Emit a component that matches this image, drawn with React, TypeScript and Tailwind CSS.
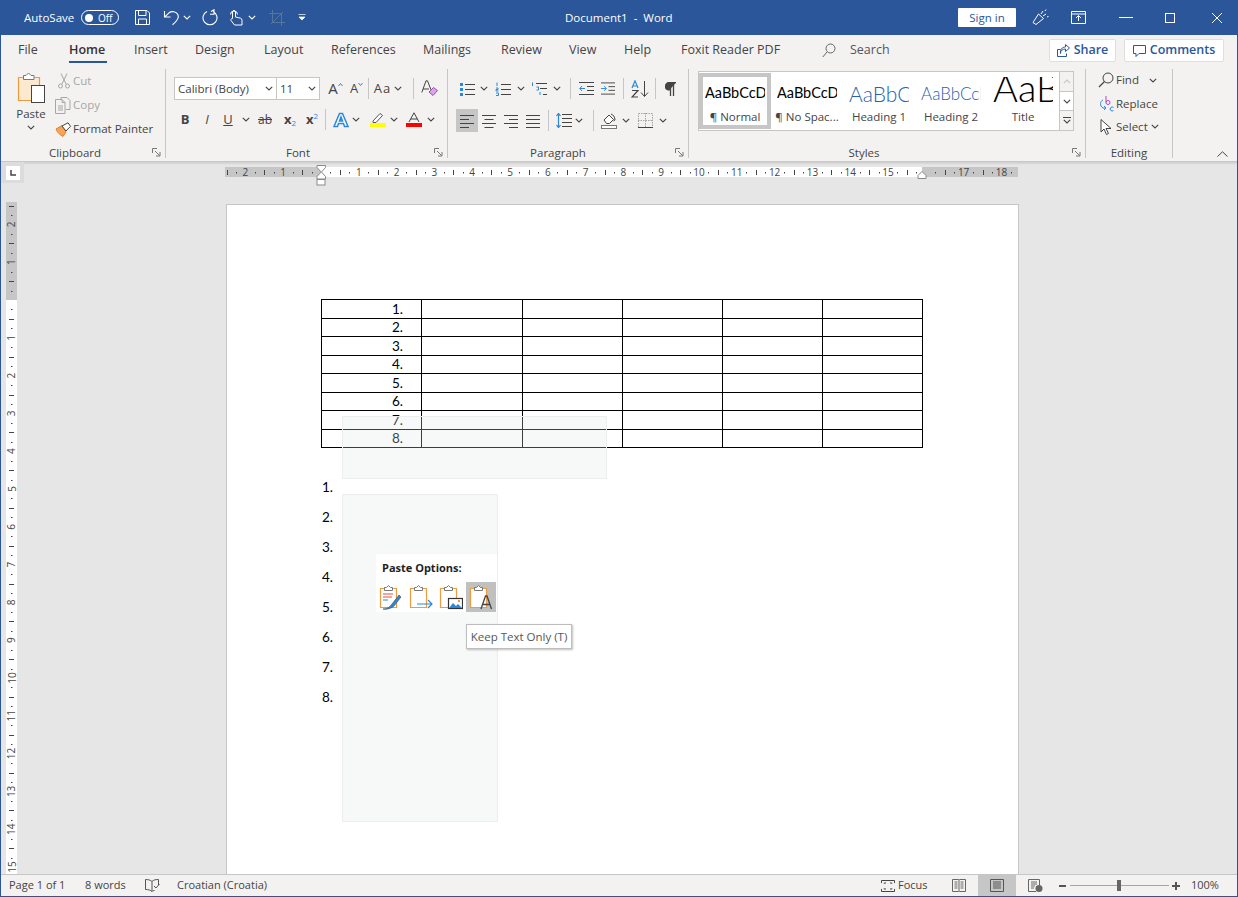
import type { ReactNode } from 'react';

const GRAY = '#444444';

const tabs = [
  { label: 'File', width: 'w-[51px]' },
  { label: 'Home', width: 'w-[65px]', active: true },
  { label: 'Insert', width: 'w-[61px]' },
  { label: 'Design', width: 'w-[69px]' },
  { label: 'Layout', width: 'w-[67px]' },
  { label: 'References', width: 'w-[92px]' },
  { label: 'Mailings', width: 'w-[78px]' },
  { label: 'Review', width: 'w-[68px]' },
  { label: 'View', width: 'w-[55px]' },
  { label: 'Help', width: 'w-[57px]' },
  { label: 'Foxit Reader PDF', width: 'w-[141px]' },
];

function Chev({ color = GRAY, className = '' }: { color?: string; className?: string }) {
  return (
    <svg width="8" height="5" viewBox="0 0 8 5" className={className}>
      <path d="M.8.8 4 4 7.2.8" fill="none" stroke={color} strokeWidth="1.1" />
    </svg>
  );
}

function Sep({ className = '' }: { className?: string }) {
  return <div className={`h-[21px] w-px shrink-0 bg-[#c6c6c6] ${className}`} />;
}

function Launcher() {
  return (
    <svg width="9" height="9" viewBox="0 0 9 9" className="absolute right-[4px] top-[4px]">
      <path d="M.5 5V.5H5" fill="none" stroke="#777" />
      <path d="M3 3l4.5 4.5M8 4v4H4" fill="none" stroke="#777" />
    </svg>
  );
}

function Group({ label, className, labelPad = '', children }: { label: string; className: string; labelPad?: string; children: ReactNode }) {
  return (
    <>
      <section className={`relative flex h-full flex-col ${className}`}>
        <div className="h-[78px]">{children}</div>
        <div className={`relative flex h-[17px] items-center justify-center text-[11.5px] text-[#444] ${labelPad}`}>
          {label}
          {label !== 'Editing' && <Launcher />}
        </div>
      </section>
      <div className="my-[3px] w-px bg-[#c6c6c6]" />
    </>
  );
}

function Cell({ className = '', children }: { className?: string; children?: ReactNode }) {
  return <div className={`flex shrink-0 items-center justify-center self-stretch ${className}`}>{children}</div>;
}

function Lines({ d, color = GRAY }: { d: string; color?: string }) {
  return (
    <svg width="16" height="14" viewBox="0 0 16 14">
      <path d={d} fill="none" stroke={color} />
    </svg>
  );
}

function PasteBase({ children }: { children?: ReactNode }) {
  return (
    <svg width="24" height="26" viewBox="0 0 24 26">
      <path d="M6.500 4.500H1.500V23.500H17.500V4.500H12.500" fill="#fff" stroke="#ed9b40" strokeWidth="1.200" />
      <path d="M5.500 6.500V3.500H7.500L9.500 1.500L11.500 3.500H13.500V6.500Z" fill="#fff" stroke="#777" />
      {children}
    </svg>
  );
}

function HRuler() {
  const marks = [];
  for (let q = -10; q <= 73; q++) {
    const x = 96 + q * 9.45;
    if (q === 0 || q === 64) continue;
    if (q % 4 === 0) {
      marks.push(
        <text key={q} x={x} y="10.500" textAnchor="middle" fontSize="10" fill={GRAY}>
          {Math.abs(q / 4)}
        </text>,
      );
    } else if (q % 2 === 0) {
      marks.push(<path key={q} d={`M${Math.round(x) + 0.5} 5v5`} stroke={GRAY} />);
    } else {
      marks.push(<rect key={q} x={Math.round(x)} y="7" width="1" height="1.500" fill={GRAY} />);
    }
  }
  return (
    <svg width="796" height="22" viewBox="0 0 796 22" className="block overflow-visible">
      <rect x="0" y="2" width="95" height="10" fill="#c6c6c6" />
      <rect x="95" y="2" width="602" height="10" fill="#fff" />
      <rect x="697" y="2" width="96" height="10" fill="#c6c6c6" />
      {marks}
      <path d="M92 .5h8.500v2L96.500 7l4 4.500v2.500H92v-2.500l4.200-4.500L92 2.500Z" fill="#fff" stroke="#8a8a8a" />
      <rect x="92" y="14.500" width="8" height="5.500" fill="#fff" stroke="#8a8a8a" />
      <path d="M693 13.500v-3l4-4 4 4v3Z" fill="#fff" stroke="#8a8a8a" />
    </svg>
  );
}

function VRuler() {
  const marks = [];
  for (let q = -10; q <= 61; q++) {
    const y = 98 + q * 9.45;
    if (q === 0) continue;
    if (q % 4 === 0) {
      marks.push(
        <text key={q} x="5.500" y={y} textAnchor="middle" fontSize="10" fill={GRAY} dominantBaseline="central" transform={`rotate(-90 5.500 ${y})`}>
          {Math.abs(q / 4)}
        </text>,
      );
    } else if (q % 2 === 0) {
      marks.push(<path key={q} d={`M3 ${Math.round(y) + 0.5}h5`} stroke={GRAY} />);
    } else {
      marks.push(<rect key={q} x="5" y={Math.round(y)} width="1.500" height="1" fill={GRAY} />);
    }
  }
  return (
    <svg width="11" height="672" viewBox="0 0 11 672" className="block">
      <rect width="11" height="98" fill="#c6c6c6" />
      <rect y="98" width="11" height="574" fill="#fff" />
      {marks}
    </svg>
  );
}

function TitleBar() {
  return (
    <header className="flex h-[35px] items-center bg-[#2b579a] text-[11.5px] text-white">
      <span className="ml-[24px] w-[57px] shrink-0">AutoSave</span>
      <div className="flex h-[15px] w-[38px] shrink-0 items-center rounded-full border border-white pl-[3px]">
        <span className="h-[8px] w-[8px] rounded-full bg-white" />
        <span className="ml-[5px] text-[10px] leading-none">Off</span>
      </div>
      <svg width="17" height="17" viewBox="0 0 17 17" className="ml-[15px] shrink-0">
        <path d="M1.500 1.500H13L15.500 4V15.500H1.500ZM4.500 1.500V6.500H12V1.500M4.500 15.500V10H12.500V15.500" fill="none" stroke="#fff" />
      </svg>
      <svg width="18" height="17" viewBox="0 0 18 17" className="ml-[12px] shrink-0">
        <path d="M1.500 2v6h6M1.800 7.800 6 3.800c3-2.300 7.500-1 9 2 1.300 3-.5 6-5.500 10" fill="none" stroke="#fff" strokeWidth="1.100" />
      </svg>
      <Chev color="#fff" className="ml-[2px] shrink-0" />
      <svg width="17" height="17" viewBox="0 0 17 17" className="ml-[11px] shrink-0">
        <path d="M9 2.500 12 .8v4.400H8M11 2.500a7 7 0 1 1-6 0" fill="none" stroke="#fff" strokeWidth="1.100" />
      </svg>
      <svg width="14" height="17" viewBox="0 0 14 17" className="ml-[10px] shrink-0">
        <path d="M3.500 9.500V3a1.500 1.500 0 0 1 3 0v5l5 1.200c1 .3 1.500 1 1.500 2V16H5.500L2 11.500c-.6-1 .7-2.200 1.500-2ZM1.500 5.500a3.500 3.500 0 1 1 7 0" fill="none" stroke="#fff" />
      </svg>
      <Chev color="#fff" className="ml-[5px] shrink-0" />
      <svg width="16" height="16" viewBox="0 0 16 16" className="ml-[13px] shrink-0">
        <path d="M3.500 0v12.500H16M0 3.500h12.500V16M2 14 14 2" fill="none" stroke="#55779f" />
      </svg>
      <svg width="8" height="7" viewBox="0 0 8 7" className="ml-[13px] shrink-0">
        <path d="M.5.500h7M1 3l3 3 3-3Z" fill="#fff" stroke="#fff" strokeWidth=".7" />
      </svg>
      <span className="ml-[259px] w-[393px] shrink-0 text-[11.5px]">Document1&nbsp; -&nbsp; Word</span>
      <button className="flex h-[19px] w-[58px] shrink-0 items-center justify-center rounded-[1px] bg-white text-[11.5px] text-[#2b579a]">
        Sign in
      </button>
      <svg width="17" height="17" viewBox="0 0 17 17" className="ml-[16px] shrink-0">
        <path d="M1 13.500 6.500 5l5 4.500-7.500 6ZM9 5l2-3M11 7l3-2M13 2l1-1.500M15 8l1.500-.5" fill="none" stroke="#fff" />
      </svg>
      <svg width="15" height="13" viewBox="0 0 15 13" className="ml-[22px] shrink-0">
        <path d="M.5.500h14v12H.5ZM.5 3h14M7.500 10V5M5 7l2.500-2.500L10 7" fill="none" stroke="#fff" />
      </svg>
      <div className="ml-[33px] h-px w-[14px] shrink-0 bg-white" />
      <div className="ml-[32px] h-[10px] w-[10px] shrink-0 border border-white" />
      <svg width="12" height="12" viewBox="0 0 12 12" className="ml-[36px] shrink-0">
        <path d="M1 1l10 10M11 1 1 11" stroke="#fff" />
      </svg>
    </header>
  );
}

function TabRow() {
  return (
    <nav className="flex h-[31px] items-center bg-[#f3f2f1] pl-[17px] pr-[13px] text-[12.5px] text-[#444]">
      {tabs.map((t) => (
        <div key={t.label} className={`${t.width} relative shrink-0`}>
          <span className={t.active ? 'font-semibold text-[#333]' : ''}>{t.label}</span>
          {t.active && <div className="absolute left-0 top-[20px] h-[2px] w-[38px] bg-[#2b579a]" />}
        </div>
      ))}
      <svg width="14" height="15" viewBox="0 0 14 15" className="shrink-0">
        <circle cx="8.500" cy="5.500" r="4.500" fill="none" stroke="#666" />
        <path d="M5 9 .8 14" stroke="#666" />
      </svg>
      <span className="ml-[14px] text-[#555]">Search</span>
      <button className="ml-auto flex h-[23px] w-[67px] items-center justify-center gap-[4px] rounded-[2px] border border-[#e1dfdd] bg-white font-semibold text-[#2b579a]">
        <svg width="13" height="13" viewBox="0 0 13 13">
          <path d="M3.500 5.500H.5v7h9v-3M3.500 9.500c0-3 2-4.500 5-4.500V7.500L12.500 4 8.500.5V3C5 3 3 5.500 3.500 9.500Z" fill="none" stroke="#2b579a" />
        </svg>
        Share
      </button>
      <button className="ml-[8px] flex h-[23px] w-[100px] items-center justify-center gap-[4px] rounded-[2px] border border-[#e1dfdd] bg-white font-semibold text-[#2b579a]">
        <svg width="13" height="13" viewBox="0 0 13 13">
          <path d="M.5 1.500h12v8H6l-3 3v-3H.5Z" fill="none" stroke="#2b579a" />
        </svg>
        Comments
      </button>
    </nav>
  );
}

function ClipboardGroup() {
  return (
    <Group label="Clipboard" className="w-[164px]" labelPad="pr-[16px]">
      <div className="flex h-full">
        <div className="ml-[7px] flex w-[46px] flex-col items-center pt-[6px] text-[11.5px] text-[#444]">
          <svg width="30" height="31" viewBox="0 0 30 31">
            <path d="M7.500 5.500H2.500V28.500H23.500V5.500H18.500" fill="#fde9cf" stroke="#ed9b40" strokeWidth="1.200" />
            <path d="M7.500 7.500V3.500H10L12.500 1 15 3.500h3v4Z" fill="#fff" stroke="#777" />
            <rect x="15.500" y="13.500" width="13" height="17" fill="#fff" stroke="#444" />
          </svg>
          <span className="mt-[3px] leading-[16px]">Paste</span>
          <Chev className="mt-[3px]" />
        </div>
        <div className="flex flex-col pt-[3px] text-[11.5px]">
          {[
            { label: 'Cut', disabled: true },
            { label: 'Copy', disabled: true },
            { label: 'Format Painter', disabled: false },
          ].map((row) => (
            <div key={row.label} className={`flex h-[24px] items-center ${row.disabled ? 'text-[#a6a6a6]' : 'text-[#444]'}`}>
              <div className="flex w-[19px] justify-center">
                {row.label === 'Cut' && (
                  <svg width="12" height="16" viewBox="0 0 12 16">
                    <path d="M3 .5 8 11M9 .5 4 11" fill="none" stroke="#a6a6a6" />
                    <circle cx="2.500" cy="13" r="2" fill="none" stroke="#a6a6a6" />
                    <circle cx="9.500" cy="13" r="2" fill="none" stroke="#a6a6a6" />
                  </svg>
                )}
                {row.label === 'Copy' && (
                  <svg width="17" height="17" viewBox="0 0 17 17">
                    <path d="M6 2.500V.5h6l3 3v9h-4M.5 2.500H7l3 3v11H.5ZM7 2.500v3h3M3 9h5M3 11h5M3 13h5" fill="none" stroke="#a6a6a6" />
                  </svg>
                )}
                {row.label === 'Format Painter' && (
                  <svg width="17" height="15" viewBox="0 0 17 15">
                    <path d="M1 7 7 3.500 11 10l-3 4.500C5 13 2 10 1 7Z" fill="#f7a35c" stroke="#d9822b" />
                    <path d="M7 4 13 .8l2.500 3.500L11 9Z" fill="#fff" stroke="#444" />
                  </svg>
                )}
              </div>
              <span>{row.label}</span>
            </div>
          ))}
        </div>
      </div>
    </Group>
  );
}

function FontGroup() {
  return (
    <Group label="Font" className="w-[281px]" labelPad="pr-[17px]">
      <div className="mt-[11px] flex h-[23px] items-center pl-[8px] text-[11.5px] text-[#444]">
        <div className="flex h-[23px] w-[103px] shrink-0 items-center justify-between border border-[#c6c6c6] bg-white px-[3px]">
          Calibri (Body)
          <Chev />
        </div>
        <div className="ml-[-1px] flex h-[23px] w-[44px] shrink-0 items-center justify-between border border-[#c6c6c6] bg-white px-[3px]">
          11
          <Chev />
        </div>
        <Cell className="ml-[5px] w-[21px] text-[15px] leading-none">
          A
          <svg width="5" height="3" viewBox="0 0 5 3" className="mb-[9px]">
            <path d="M.5 3 2.500.5 4.500 3" fill="none" stroke="#2b88d8" />
          </svg>
        </Cell>
        <Cell className="w-[21px] text-[13px] leading-none">
          A
          <svg width="5" height="3" viewBox="0 0 5 3" className="mb-[8px]">
            <path d="M.5 0 2.500 2.500 4.500 0" fill="none" stroke="#2b88d8" />
          </svg>
        </Cell>
        <Sep className="ml-px" />
        <Cell className="w-[38px] gap-[3px] text-[13px] tracking-[1px]">
          Aa
          <Chev />
        </Cell>
        <Sep className="ml-[6px]" />
        <Cell className="ml-[7px] w-[17px]">
          <svg width="17" height="17" viewBox="0 0 17 17">
            <path d="M.8 12.500 5 .8h1.500l3.500 9M2 9h6" fill="none" stroke="#444" />
            <path d="M8 12 12.500 7.500l4 3L12 15.500Z" fill="#d9a6e6" stroke="#9b4fb5" />
          </svg>
        </Cell>
      </div>
      <div className="mt-[8px] flex h-[23px] items-center pl-[8px] text-[13px] text-[#444]">
        <Cell className="w-[22px] font-bold">B</Cell>
        <Cell className="w-[22px] italic">I</Cell>
        <Cell className="w-[20px] underline">U</Cell>
        <Cell className="w-[16px]"><Chev /></Cell>
        <Cell className="w-[22px] text-[12px] line-through">ab</Cell>
        <Cell className="ml-[3px] w-[22px] font-bold">x<span className="mt-[7px] text-[8px] font-normal text-[#2b88d8]">2</span></Cell>
        <Cell className="w-[22px] font-bold">x<span className="mb-[7px] text-[8px] font-normal text-[#2b88d8]">2</span></Cell>
        <Sep className="ml-[2px]" />
        <Cell className="ml-[4px] w-[22px]">
          <svg width="16" height="16" viewBox="0 0 16 16">
            <path d="M6.500 1.500h3l5.500 13h-3.500l-1-3H5.500l-1 3H1ZM8 5l-1.500 4h3Z" fill="#fff" stroke="#2b88d8" strokeWidth="1.500" />
          </svg>
        </Cell>
        <Cell className="w-[8px]"><Chev /></Cell>
        <Cell className="ml-[7px] w-[22px]">
          <svg width="16" height="15" viewBox="0 0 16 15">
            <path d="M3 9 10 1.500l2.500 2-6.500 7H3Z" fill="#fff" stroke="#555" />
            <rect x="0" y="11" width="16" height="4" fill="#ffff00" />
          </svg>
        </Cell>
        <Cell className="ml-px w-[8px]"><Chev /></Cell>
        <Cell className="ml-[5px] w-[22px]">
          <svg width="16" height="15" viewBox="0 0 16 15">
            <path d="M3 10 8 .8l5 9.200M4.500 7h7" fill="none" stroke="#444" />
            <rect x="0" y="11" width="16" height="4" fill="#ff0000" />
          </svg>
        </Cell>
        <Cell className="ml-[2px] w-[8px]"><Chev /></Cell>
      </div>
    </Group>
  );
}

function ParagraphGroup() {
  return (
    <Group label="Paragraph" className="w-[240px]" labelPad="pr-[20px]">
      <div className="mt-[11px] flex h-[23px] items-center pl-[8px]">
        <Cell className="w-[22px]">
          <svg width="16" height="14" viewBox="0 0 16 14">
            <path d="M1 1h3v3H1ZM1 6h3v3H1ZM1 11h3v3H1Z" fill="#2b88d8" />
            <path d="M6 2.500h10M6 7.500h10M6 12.500h10" stroke="#444" />
          </svg>
        </Cell>
        <Cell className="w-[12px]"><Chev /></Cell>
        <Cell className="w-[26px]">
          <svg width="16" height="14" viewBox="0 0 16 14">
            <path d="M6 2.500h10M6 7.500h10M6 12.500h10" stroke="#444" />
            <path d="M2 .5v3.500M1 6h2v1.500H1V9h2.500M1 11h2.500v2.500H1" fill="none" stroke="#2b88d8" />
          </svg>
        </Cell>
        <Cell className="w-[10px]"><Chev /></Cell>
        <Cell className="w-[26px]">
          <svg width="16" height="14" viewBox="0 0 16 14">
            <path d="M5 1.500h11M9 6.500h7M12 12.500h4" stroke="#444" />
            <path d="M1.500.5v3.500M5.500 5h2v3h-2M9 10v3" fill="none" stroke="#2b88d8" />
          </svg>
        </Cell>
        <Cell className="w-[10px]"><Chev /></Cell>
        <Sep className="ml-[8px]" />
        <Cell className="w-[30px]">
          <svg width="15" height="13" viewBox="0 0 15 13">
            <path d="M0 .5h15M8 4.500h7M8 8.500h7M0 12.500h15" stroke="#444" />
            <path d="M6 6.500H.8M3 4 .8 6.500 3 9" fill="none" stroke="#2b88d8" />
          </svg>
        </Cell>
        <Cell className="w-[14px]">
          <svg width="15" height="13" viewBox="0 0 15 13">
            <path d="M0 .5h15M8 4.500h7M8 8.500h7M0 12.500h15" stroke="#444" />
            <path d="M0 6.500h5.500M3.500 4l2.200 2.500L3.500 9" fill="none" stroke="#2b88d8" />
          </svg>
        </Cell>
        <Sep className="ml-[8px]" />
        <Cell className="w-[31px]">
          <svg width="18" height="18" viewBox="0 0 18 18">
            <path d="M1 8 4 .8 7 8M2 6h4" fill="none" stroke="#2b88d8" strokeWidth="1.200" />
            <path d="M1 10.500h6L1 17h6" fill="none" stroke="#444" strokeWidth="1.200" />
            <path d="M13.500 1v15M10 12.500l3.500 4 3.500-4" fill="none" stroke="#444" />
          </svg>
        </Cell>
        <Sep />
        <Cell className="w-[28px]">
          <svg width="11" height="14" viewBox="0 0 11 14">
            <path d="M4.500 8C1 8 .5 6 .5 4.500S1.500.5 4.500.5H11M5.500 1v13M8.500 1v13" fill="#444" stroke="#444" strokeWidth="1.300" />
          </svg>
        </Cell>
      </div>
      <div className="mt-[9px] flex h-[23px] items-center pl-[8px]">
        <Cell className="w-[22px] bg-[#c6c6c6]"><Lines d="M1 1.500h14M1 5.500h9M1 9.500h14M1 13.500h9" /></Cell>
        <Cell className="w-[22px]"><Lines d="M1 1.500h14M3.500 5.500h9M1 9.500h14M3.500 13.500h9" /></Cell>
        <Cell className="w-[22px]"><Lines d="M1 1.500h14M6 5.500h9M1 9.500h14M6 13.500h9" /></Cell>
        <Cell className="w-[22px]"><Lines d="M1 1.500h14M1 5.500h14M1 9.500h14M1 13.500h14" /></Cell>
        <Sep className="ml-[4px]" />
        <Cell className="ml-[7px] w-[16px]">
          <svg width="16" height="15" viewBox="0 0 16 15">
            <path d="M6 1.500h10M6 5.500h10M6 9.500h10M6 13.500h10" stroke="#444" />
            <path d="M2.500 0v15M.5 3l2-2.500 2 2.500M.5 12l2 2.500 2-2.500" fill="none" stroke="#2b88d8" strokeWidth="1.200" />
          </svg>
        </Cell>
        <Cell className="w-[14px]"><Chev /></Cell>
        <Sep className="ml-[7px]" />
        <Cell className="ml-[7px] w-[16px]">
          <svg width="16" height="16" viewBox="0 0 16 16">
            <path d="M3 7 8 2l4.500 4.500-4 4h-3Z" fill="#fff" stroke="#444" />
            <path d="M10 1c2 .5 4 3 4 6l-1.500 1" fill="none" stroke="#444" />
            <rect x=".5" y="12.500" width="15" height="3" fill="#fff" stroke="#777" />
          </svg>
        </Cell>
        <Cell className="w-[18px]"><Chev /></Cell>
        <Cell className="ml-[3px] w-[15px]">
          <svg width="15" height="15" viewBox="0 0 15 15">
            <path d="M.5.500h14v14H.5ZM7.500 0v15M0 7.500h15" fill="none" stroke="#a6a6a6" strokeDasharray="1.500 1" />
            <path d="M0 14.500h15" stroke="#444" />
          </svg>
        </Cell>
        <Cell className="w-[20px]"><Chev /></Cell>
      </div>
    </Group>
  );
}

const galleryStyles = [
  { label: '¶ Normal', preview: 'AaBbCcDc', cls: 'pt-[2px] text-[14.5px] text-black', frame: 'border-[#c6c6c6]' },
  { label: '¶ No Spac...', preview: 'AaBbCcDc', cls: 'pt-[2px] text-[14.5px] text-black', frame: 'border-transparent' },
  { label: 'Heading 1', preview: 'AaBbCc', cls: 'pt-[2px] text-[21px] font-light text-[#2a5fb0]', frame: 'border-transparent' },
  { label: 'Heading 2', preview: 'AaBbCcD', cls: 'pt-[2px] text-[17px] font-light text-[#2a5fb0]', frame: 'border-transparent' },
  { label: 'Title', preview: 'AaB', cls: 'pb-[11px] text-[38px] font-light text-black', frame: 'border-transparent' },
];

function StylesGroup() {
  return (
    <Group label="Styles" className="w-[396px]" labelPad="pr-[46px]">
      <div className="ml-[9px] mt-[5px] flex h-[60px]">
        <div className="flex w-[362px] border border-[#c6c6c6] bg-white py-px">
          {galleryStyles.map((s) => (
            <div key={s.label} className={`flex w-[72px] flex-col items-center overflow-hidden border-[4px] ${s.frame}`}>
              <div className={`flex h-[33px] w-[60px] items-center overflow-hidden whitespace-nowrap font-['Lato',sans-serif] leading-none ${s.cls}`}>
                {s.preview}
              </div>
              <div className="mt-[2px] w-full whitespace-nowrap text-center text-[11.5px] leading-[16px] text-[#444]">{s.label}</div>
            </div>
          ))}
        </div>
        <div className="ml-[-1px] flex w-[15px] flex-col">
          <Cell className="h-[21px] border border-[#c6c6c6]"><Chev color="#c6c6c6" className="rotate-180" /></Cell>
          <Cell className="mt-[-1px] h-[20px] border border-[#c6c6c6] bg-white"><Chev /></Cell>
          <Cell className="mt-[-1px] h-[21px] flex-col gap-[1px] border border-[#c6c6c6]">
            <div className="h-px w-[8px] bg-[#444]" />
            <Chev />
          </Cell>
        </div>
      </div>
    </Group>
  );
}

function EditingGroup() {
  return (
    <Group label="Editing" className="w-[86px]">
      <div className="flex flex-col pl-[10px] pt-[2px] text-[11.5px] text-[#444]">
        <div className="flex h-[24px] items-center">
          <Cell className="w-[20px]">
            <svg width="16" height="16" viewBox="0 0 16 16">
              <circle cx="10" cy="6" r="5" fill="none" stroke="#444" />
              <path d="M6.500 9.500 1 15" stroke="#444" strokeWidth="1.300" />
            </svg>
          </Cell>
          <span>Find</span>
          <Chev className="ml-[10px]" />
        </div>
        <div className="flex h-[23px] items-center">
          <Cell className="w-[20px]">
            <svg width="15" height="17" viewBox="0 0 15 17">
              <path d="M7 1v6.500a2 2 0 0 0 4 0 2 2 0 0 0-4 0" fill="none" stroke="#b146c2" />
              <path d="M14.500 12.500a2 2 0 1 0 0 3" fill="none" stroke="#2b88d8" />
              <path d="M4 5C1 6 .5 11 4 13l3 0M5 11l2 2-2 2" fill="none" stroke="#2b88d8" />
            </svg>
          </Cell>
          <span>Replace</span>
        </div>
        <div className="flex h-[23px] items-center">
          <Cell className="w-[20px]">
            <svg width="12" height="16" viewBox="0 0 12 16">
              <path d="M1 .5V13l3-3 2.500 5.500 2-1L6 9.500h5Z" fill="#fff" stroke="#444" />
            </svg>
          </Cell>
          <span>Select</span>
          <Chev className="ml-[3px]" />
        </div>
      </div>
    </Group>
  );
}

function Ribbon() {
  return (
    <div className="flex h-[95px] bg-[#f3f2f1]">
      <ClipboardGroup />
      <FontGroup />
      <ParagraphGroup />
      <StylesGroup />
      <EditingGroup />
      <div className="flex flex-1 items-end justify-end pb-[4px] pr-[9px]">
        <svg width="11" height="6" viewBox="0 0 11 6">
          <path d="M.5 5.500 5.500.8l5 4.700" fill="none" stroke="#444" />
        </svg>
      </div>
    </div>
  );
}

function PasteOptions() {
  return (
    <div className="absolute left-[149px] top-[349px] h-[58px] w-[121px] bg-white">
      <div className="pl-[6px] pt-[6px] text-[11px] font-bold leading-[16px] text-[#1f1f1f]">Paste Options:</div>
      <div className="mt-[6px] flex">
        <Cell className="h-[30px] w-[30px]">
          <PasteBase>
            <path d="M4 10h10M4 13h9" stroke="#e04b3f" />
            <path d="M4 16h5" stroke="#2b88d8" />
            <path d="M4 25c4 0 7-2 9-5l7-9 2 2-7 9c-2 2-7 4-11 3Z" fill="#2b88d8" stroke="#444" strokeWidth=".6" />
          </PasteBase>
        </Cell>
        <Cell className="h-[30px] w-[30px]">
          <PasteBase>
            <path d="M8 20h15M19 16l4 4-4 4" fill="none" stroke="#2b88d8" strokeWidth="1.200" />
          </PasteBase>
        </Cell>
        <Cell className="h-[30px] w-[30px]">
          <PasteBase>
            <rect x="9.500" y="14.500" width="14" height="10" fill="#fff" stroke="#333" strokeWidth="1.200" />
            <path d="M10 24l4-5 3 3 2-2 4 4Z" fill="#2b88d8" />
            <rect x="19" y="16" width="2" height="2" fill="#ed9b40" />
          </PasteBase>
        </Cell>
        <Cell className="h-[30px] w-[30px] bg-[#c0c0c0]">
          <PasteBase>
            <path d="M12 25 16.500 12h1.500l4.500 13M13.500 20.500h7.500" fill="none" stroke="#444" strokeWidth="1.300" />
          </PasteBase>
        </Cell>
      </div>
    </div>
  );
}

function DocumentPage() {
  return (
    <div className="relative ml-[209px] mt-[2px] w-[793px] shrink-0 self-stretch overflow-hidden border-x border-t border-[#c6c6c6] bg-white pl-[94px] pt-[94px] font-['Lato',sans-serif] text-[13.5px] text-black">
      <table className="w-[602px] table-fixed border-collapse border border-black">
        <colgroup>
          <col className="w-[100px]" />
          <col className="w-[101px]" />
          <col className="w-[100px]" />
          <col className="w-[100px]" />
          <col className="w-[100px]" />
          <col className="w-[100px]" />
        </colgroup>
        <tbody>
          {[1, 2, 3, 4, 5, 6, 7, 8].map((n) => (
            <tr key={n} className="h-[18.5px]">
              {[0, 1, 2, 3, 4, 5].map((c) => (
                <td key={c} className="h-[18.5px] border border-black p-0 pl-[70px] leading-[16px]">
                  {c === 0 ? `${n}.` : ''}
                </td>
              ))}
            </tr>
          ))}
        </tbody>
      </table>
      <ol className="mt-[24px] flex flex-col pl-px">
        {[1, 2, 3, 4, 5, 6, 7, 8].map((n) => (
          <li key={n} className="h-[30px] leading-[30px]">{n}.</li>
        ))}
      </ol>

      {/* leftover ghost panels from the context menu */}
      <div className="absolute left-[115px] top-[211px] h-[63px] w-[265px] border border-[#eceeee] bg-[#e0e5e5]/[0.27]" />
      <div className="absolute left-[115px] top-[289px] h-[328px] w-[156px] border border-[#eceeee] bg-[#e0e5e5]/[0.27]" />
      <div className="font-['Open_Sans',sans-serif]">
        <PasteOptions />
        <div className="absolute left-[239px] top-[419px] flex h-[25px] w-[106px] items-center justify-center border border-[#bdbdbd] bg-white text-[11.5px] text-[#575757] shadow-[1px_1px_2px_rgba(0,0,0,0.25)]">
          Keep Text Only (T)
        </div>
      </div>
    </div>
  );
}

function StatusBar() {
  return (
    <footer className="flex h-[22px] items-center border-t border-[#c6c6c6] bg-[#f3f2f1] text-[11px] text-[#444]">
      <span className="ml-[8px] w-[76px] shrink-0">Page 1 of 1</span>
      <span className="w-[60px] shrink-0">8 words</span>
      <svg width="15" height="13" viewBox="0 0 15 13" className="shrink-0">
        <path d="M7 2.500C5.500 1 3 .5.500.5v10c2.500 0 5 .5 6.500 2V2.500c1.500-1.500 3-2 6.500-2V6M7.500 12l2-.5M9 7l2 2 3.500-4" fill="none" stroke="#555" />
      </svg>
      <span className="ml-[17px] w-[704px] shrink-0">Croatian (Croatia)</span>
      <svg width="14" height="12" viewBox="0 0 14 12" className="shrink-0">
        <path d="M.5 3V.5h13V3M.5 9v2.500h13V9M3 3.500V3h2M9 3h2v.5M3 8.500V9h2M9 9h2v-.5" fill="none" stroke="#444" />
      </svg>
      <span className="ml-[3px] w-[54px] shrink-0">Focus</span>
      <svg width="14" height="13" viewBox="0 0 14 13" className="shrink-0">
        <path d="M.5.500h6l.5.500.5-.5h6v12h-6l-.5-.5-.5.500h-6ZM7 1v11M2.500 3h3M2.500 5h3M2.500 7h3M2.500 9h3M8.500 3h3M8.500 5h3M8.500 7h3M8.500 9h3" fill="none" stroke="#666" />
      </svg>
      <Cell className="ml-[12px] w-[38px] bg-[#c6c6c6]">
        <svg width="14" height="13" viewBox="0 0 14 13">
          <path d="M.5.500h13v12H.5ZM3 3h8M3 5h8M3 7h8M3 9h8" fill="none" stroke="#555" />
        </svg>
      </Cell>
      <svg width="15" height="13" viewBox="0 0 15 13" className="ml-[12px] shrink-0">
        <path d="M8 12.500H.5V.5h11V6M3 3h6M3 5h6M3 7h4M3 9h3" fill="none" stroke="#666" />
        <circle cx="11" cy="9.500" r="3.500" fill="#666" />
      </svg>
      <div className="ml-[16px] h-[2px] w-[7px] shrink-0 bg-[#555]" />
      <div className="relative ml-[4px] h-px w-[99px] shrink-0 bg-[#a6a6a6]">
        <div className="absolute left-[47px] top-[-5px] h-[11px] w-[4px] bg-[#666]" />
      </div>
      <div className="relative ml-[3px] h-[2px] w-[8px] shrink-0 bg-[#555]">
        <div className="absolute left-[3px] top-[-3px] h-[8px] w-[2px] bg-[#555]" />
      </div>
      <span className="ml-[11px] shrink-0">100%</span>
    </footer>
  );
}

export default function App() {
  return (
    <div className="flex h-[897px] w-[1238px] flex-col overflow-hidden border-x border-b border-[#2b579a] bg-[#e6e6e6] font-['Open_Sans',sans-serif]">
      <div className="mx-[-1px]">
        <TitleBar />
      </div>
      <TabRow />
      <Ribbon />
      <div className="h-[4px] bg-gradient-to-b from-[#c4c4c4] to-[#e6e6e6]" />
      <div className="flex h-[37px]">
        <div className="relative mt-[-3px] flex h-[21px] w-[23px] items-center justify-center bg-[#dcdcdc]">
          <div className="flex h-[14px] w-[14px] items-center justify-center bg-white">
            <svg width="6" height="6" viewBox="0 0 6 6">
              <path d="M1 0v5h5" fill="none" stroke="#444" strokeWidth="1.500" />
            </svg>
          </div>
        </div>
        <div className="ml-[201px]">
          <HRuler />
        </div>
      </div>
      <div className="flex min-h-0 flex-1">
        <div className="ml-[5px] w-[11px] shrink-0">
          <VRuler />
        </div>
        <DocumentPage />
      </div>
      <StatusBar />
    </div>
  );
}
